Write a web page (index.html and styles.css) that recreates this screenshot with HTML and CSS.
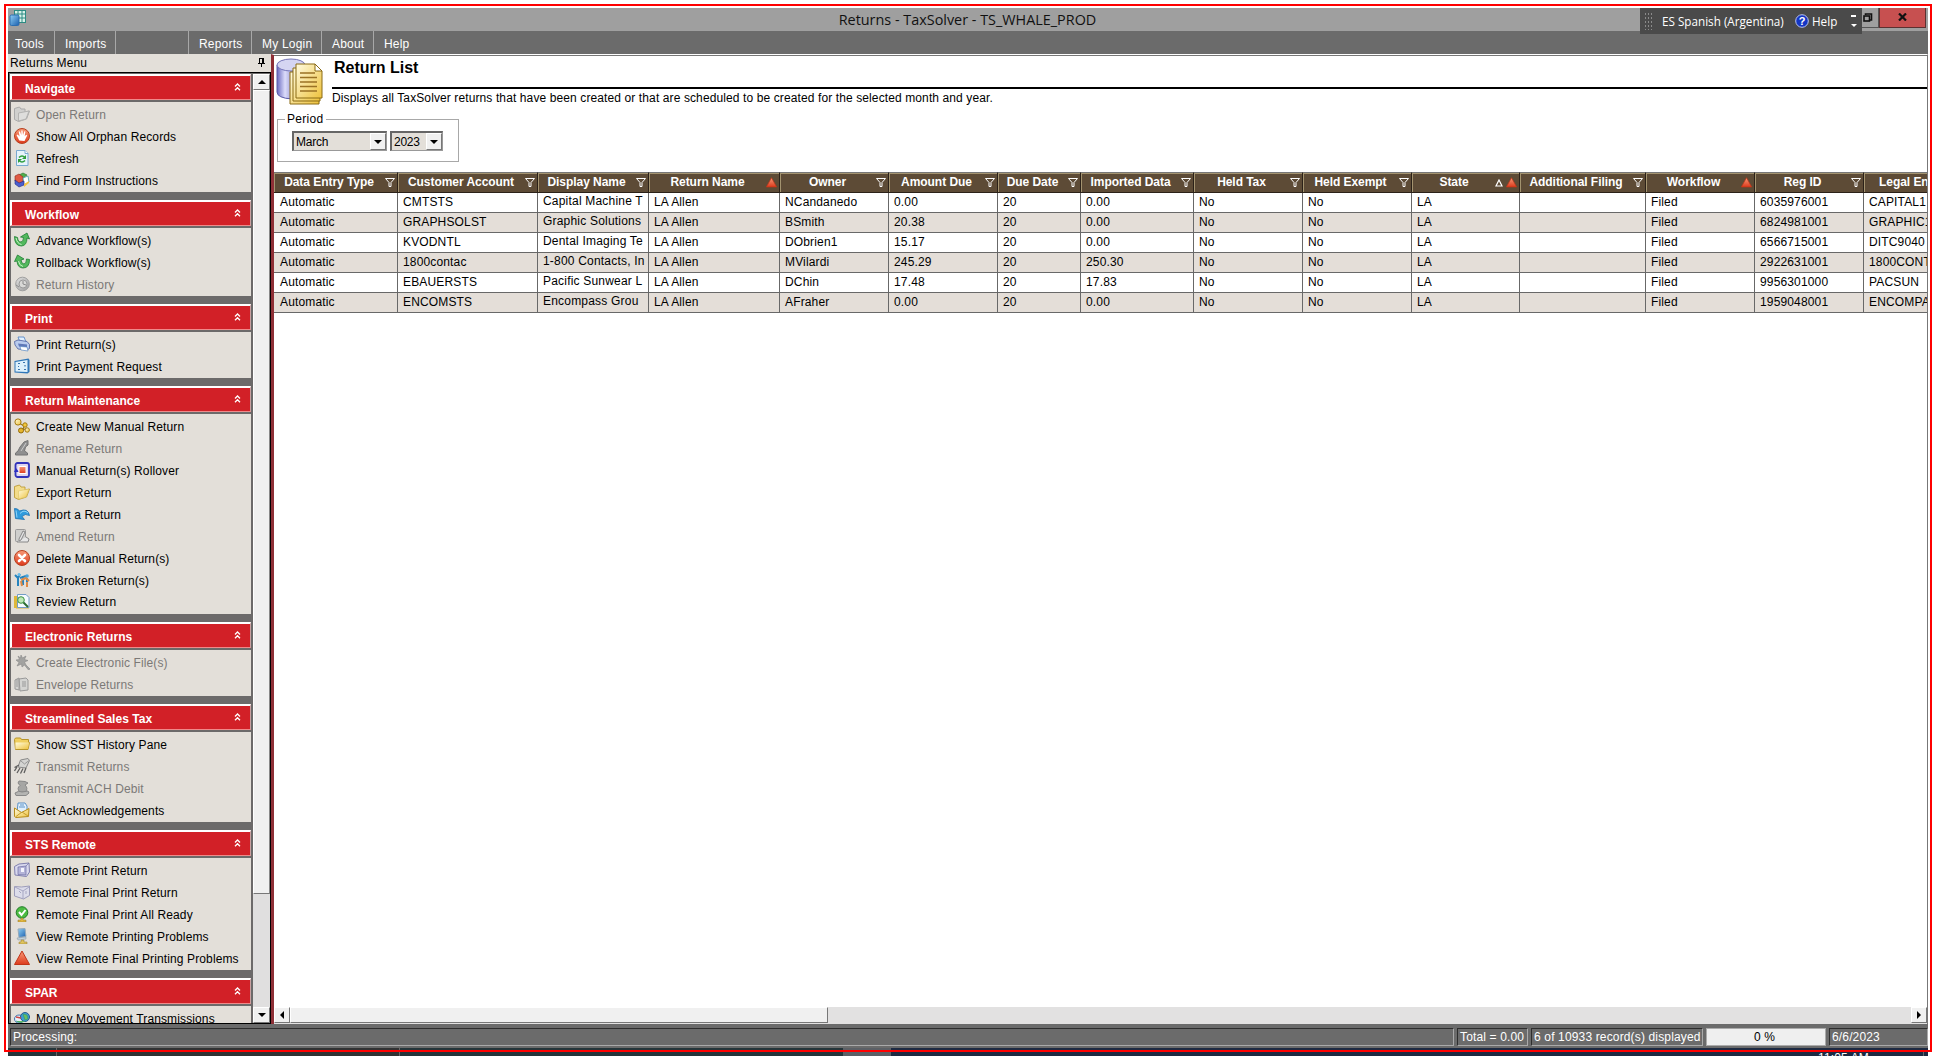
FILE: index.html
```html
<!DOCTYPE html>
<html lang="en">
<head>
<meta charset="utf-8">
<title>Returns - TaxSolver - TS_WHALE_PROD</title>
<link rel="stylesheet" href="styles.css">
</head>
<body>
<svg class="defs" width="0" height="0">
  <defs>
    <linearGradient id="gBlue" x1="0" y1="0" x2="1" y2="1"><stop offset="0" stop-color="#8fd0f5"/><stop offset="1" stop-color="#1c5fae"/></linearGradient>
    <linearGradient id="gYel" x1="0" y1="0" x2="1" y2="1"><stop offset="0" stop-color="#fffbe0"/><stop offset="1" stop-color="#eec23c"/></linearGradient>
    <linearGradient id="gRed" x1="0" y1="0" x2="0" y2="1"><stop offset="0" stop-color="#f79a78"/><stop offset="1" stop-color="#dd3a1c"/></linearGradient>
    <linearGradient id="gGrey" x1="0" y1="0" x2="1" y2="1"><stop offset="0" stop-color="#e2e2e2"/><stop offset="1" stop-color="#9a9a9a"/></linearGradient>
    <linearGradient id="gCyl" x1="0" y1="0" x2="1" y2="0"><stop offset="0" stop-color="#6a6ac0"/><stop offset=".35" stop-color="#dcdcfa"/><stop offset="1" stop-color="#5a5ab4"/></linearGradient>
    <symbol id="tri" viewBox="0 0 16 16"><path d="M8 1 15.5 14.5H.5Z" fill="url(#gRed)" stroke="#c03418"/></symbol>
    <symbol id="funnel" viewBox="0 0 10 9"><path d="M.5.5h9L6 4.5v4H4v-4Z" fill="none" stroke="#fff"/></symbol>
    <symbol id="open" viewBox="0 0 16 16"><path d="M.5 2.500 5.500 1l1.500 2h4v3l4.500-1-3 8-8 2.500-4-2Z" fill="#d0d0ce" stroke="#aaa"/><path d="M4.500 7l10.500-2-3 8-7.500 2Z" fill="#dededc" stroke="#b4b4b2"/></symbol>
    <symbol id="hand" viewBox="0 0 16 16"><circle cx="8" cy="8" r="7.500" fill="url(#gRed)" stroke="#b8401e"/><path d="M5.300 12.500 2.600 7.300l1.200-.7 1.800 2-.9-5 1.300-.2L7.300 7V2.500h1.300l.4 4.500 1.300-3.800 1.100.3-.7 4.700 1.500-1.500 1 .7-2.700 5.600Z" fill="#fff"/></symbol>
    <symbol id="refresh" viewBox="0 0 16 16"><path d="M2.500.5h8.500l3 3v12H2.500Z" fill="#e6f3fb" stroke="#7aa9d0"/><path d="M11 .5v3h3" fill="#fff" stroke="#7aa9d0"/><path d="M5 7.500q3-3 6 0M11 10.500q-3 3-6 0" fill="none" stroke="#2f9e3c" stroke-width="1.600"/><path d="M12 5v4H8ZM4 13V9h4Z" fill="#2f9e3c"/></symbol>
    <symbol id="books" viewBox="0 0 16 16"><path d="M5 3 9 1l4 2-4 3Z" fill="#4fae4c" stroke="#27702a" stroke-width=".6"/><path d="M1 4l4-2 4 3v5L5 12 1 9Z" fill="#e05a44" stroke="#8e2a1c" stroke-width=".6"/><path d="M9 6l5-2 1 6-5 3Z" fill="#fff" stroke="#49a" stroke-width=".8"/><path d="M1 8l4 3 5-2v4l-5 2-4-3Z" fill="#4b5fd0" stroke="#222a80" stroke-width=".6"/><path d="M10 12l5-3v2l-5 4Z" fill="#f5c242"/></symbol>
    <symbol id="adv" viewBox="0 0 16 16"><path d="M.5 4.500Q.5 14 7.500 14q5.500-.5 5.500-8l2.500 1-2.500-6-6.500 4 3 .5q0 4-2.500 4.500Q4 10 3.500 5.500Z" fill="#52b95c" stroke="#1d7d32" stroke-width=".8"/><path d="M2 6q1 5.500 5.500 6.500" stroke="#c8f2c8" fill="none"/></symbol>
    <symbol id="roll" viewBox="0 0 16 16"><path d="M15.500 5.500q0 8.500-6.500 8.500-5.500 0-6-7L.5 7.500 3.500 1l6.500 4-3 1q.5 4 3 4 2.500-.5 2.500-5Z" fill="#52b95c" stroke="#1d7d32" stroke-width=".8"/><path d="M4.500 7q.5 4.500 4.500 5.500" stroke="#c8f2c8" fill="none"/></symbol>
    <symbol id="clock" viewBox="0 0 16 16"><circle cx="8.500" cy="8" r="6.800" fill="url(#gGrey)" stroke="#a0a0a0"/><circle cx="9" cy="8" r="4" fill="#d8d8d6" stroke="#9b9b9b"/><path d="M9 5v3l3 1M2 9l3 2" stroke="#8a8a8a" fill="none"/></symbol>
    <symbol id="printer" viewBox="0 0 16 16"><path d="M4 1h6l2 5H6Z" fill="#dff0ff" stroke="#4a7fc0" stroke-width=".8"/><path d="M.5 5.500 4 4l9 1.500 2.500 3v4L13 14l-9-1L1 9Z" fill="#b9cbee" stroke="#4b5e9e" stroke-width=".8"/><path d="M4 7.500l9 1v3l-8-1Z" fill="#5f78b8"/><path d="M6 10.500l7 .5 1 4-7-1Z" fill="#fff" stroke="#4a7fc0" stroke-width=".6"/></symbol>
    <symbol id="pay" viewBox="0 0 16 16"><path d="M.5 3 14.500.5l1 1.500v12L13.500 15.500.5 14.500Z" fill="#2f76b8"/><path d="M1.500 4l12-2V14l-12-.5Z" fill="#dcf0fc"/><path d="M4 5.500h2M9 4.500h2M4 11.500h2M10 11.500h2M11 7v1.500M4 8.500h1" stroke="#3974ad" stroke-width="1.200"/></symbol>
    <symbol id="gears" viewBox="0 0 16 16"><path d="M5 5l5 3-1 4 4-2" fill="none" stroke="#9a7a1c" stroke-width="1.200"/><circle cx="4" cy="4" r="3.100" fill="url(#gYel)" stroke="#a57a10"/><circle cx="11" cy="7" r="2.200" fill="#f1c73c" stroke="#a57a10"/><circle cx="7" cy="12.500" r="2.500" fill="#e6b52c" stroke="#936a0a"/><circle cx="13.200" cy="12" r="2.200" fill="url(#gYel)" stroke="#a57a10"/></symbol>
    <symbol id="quill" viewBox="0 0 16 16"><path d="M14 .5 10 2 6 7l-2 4-2.500 2v2h12v-2l-3-2 1-4 2.500-2Z" fill="#8f8f8f" stroke="#747474"/><path d="M12 3 7 11" stroke="#ccc"/></symbol>
    <symbol id="rollover" viewBox="0 0 16 16"><rect x="1.500" y="1" width="13.500" height="14" rx="2" fill="#ddd6ee" stroke="#3134bb" stroke-width="1.800"/><path d="M0 10l2-4 3 4Z" fill="#2c2fc4"/><rect x="5" y="4.500" width="7" height="7" fill="url(#gRed)" stroke="#fff"/></symbol>
    <symbol id="export" viewBox="0 0 16 16"><path d="M.5 2.500 5.500 1l1.500 2h4v3l4.500-1-3 8-8 2.500-4-2Z" fill="#f3dc8a" stroke="#b89428" stroke-width=".8"/><path d="M4.500 7l10.500-2-3 8-7.500 2Z" fill="url(#gYel)" stroke="#dcc262" stroke-width=".6"/></symbol>
    <symbol id="import" viewBox="0 0 16 16"><path d="M.5 2.500l1 10 9 1-2.500-3q3-3.500 7.500-1-1.500-8-10-4.500L3.500 3Z" fill="#2f9bdd" stroke="#1a6fae" stroke-width=".8"/><path d="M2 4.500l1 7M6 7.500q4-4.500 8-.5" stroke="#94d6f7" fill="none"/></symbol>
    <symbol id="amend" viewBox="0 0 16 16"><rect x="1.500" y="1.500" width="10" height="12" rx="1" fill="#cfcfcd" stroke="#999"/><path d="M9 3l2 1-4 8-2 1v-2ZM3 14h11l1-3-3-2" fill="#e6e6e6" stroke="#888"/></symbol>
    <symbol id="delete" viewBox="0 0 16 16"><circle cx="8" cy="8" r="7.500" fill="url(#gRed)" stroke="#b8401e"/><path d="M5 5l6 6M11 5l-6 6" stroke="#fff" stroke-width="2.600" stroke-linecap="round"/></symbol>
    <symbol id="fix" viewBox="0 0 16 16"><path d="M1 3l3 3 2-4M4 6v8M6 6l6-2M9 4v9M13 6v8" stroke="#2684be" stroke-width="2" fill="none"/><path d="M7 8l5-2 3 3M7 9l1 5M13 10v5" stroke="#df8a46" stroke-width="2" fill="none"/><circle cx="5" cy="2.500" r="1.500" fill="#67bbe8"/><circle cx="13" cy="4" r="1.800" fill="#4aa4dc"/></symbol>
    <symbol id="review" viewBox="0 0 16 16"><path d="M0 3h4v12H0ZM2 13h13v2.500H2Z" fill="#dfb83a"/><path d="M3.500 1.500H12l3 3v10H3.500Z" fill="#f5faff" stroke="#739cc6"/><path d="M9 9l5 5" stroke="#2b6c32" stroke-width="2"/><circle cx="7" cy="7" r="3.300" fill="#bfe8b8" stroke="#3d9140"/></symbol>
    <symbol id="efile" viewBox="0 0 16 16"><path d="M7 1l1.500 3L12 2l-1.500 3.500 3.500 1-3.500 1.500L12 11l4 4-1.500 1-4-5L8 13l-.5-3L3 12l2-3.500L2 6l3.500-.5L4 2l2.500 2Z" fill="#a2a2a0" stroke="#888" stroke-width=".6"/></symbol>
    <symbol id="envelope" viewBox="0 0 16 16"><path d="M1 4l4-2v12l-4-1ZM5 3l7-1 2 2v10l-8 1Z" fill="#d4d4d2" stroke="#999"/><path d="M3 3v8M8 6h4M8 8h4M8 10h4" stroke="#999"/></symbol>
    <symbol id="folder" viewBox="0 0 16 16"><path d="M.5 3.500 1.500 2h5l1 1.500h7v3h1L14 13.500H1.500Z" fill="#f0cf60" stroke="#b89428"/><path d="M1.500 6.500H15L14 13H1.500Z" fill="url(#gYel)"/></symbol>
    <symbol id="transmit" viewBox="0 0 16 16"><path d="M6.500 2 14 .5l1.500 2L12 10 4 9Z" fill="#d4d4d2" stroke="#888"/><path d="M3 9l-2.500 4M6 10l-3 5M9 10.500l-2.500 5M12 10l-2 5M5 7 .5 9.500" stroke="#5f5f5f" stroke-width="1.300"/><path d="M7 3l3.500 3L15 2.500" stroke="#999" fill="none"/></symbol>
    <symbol id="debit" viewBox="0 0 16 16"><path d="M5 1l6 .5 3 1.500-3 2q3.500 3 .5 7H5.500Q2.500 8 6 5.500L4 3Z" fill="#a6a6a4" stroke="#888"/><path d="M1 13q4-3 7-1l6-1 1 2-3 2.500H2Z" fill="#b4b4b2" stroke="#888"/></symbol>
    <symbol id="ack" viewBox="0 0 16 16"><path d="M4 1h7l2 3v7H3Z" fill="#e1f0fc" stroke="#5b91c7"/><path d="M6 3h4M5 5h6" stroke="#5b91c7"/><path d="M.5 6l7 4.500L15 6.500l-.5 8-12.500 1-1.500-1Z" fill="url(#gYel)" stroke="#b88d1c"/><path d="M2 14.500l6-4.500 6 4" fill="none" stroke="#c59c2c"/></symbol>
    <symbol id="rprint" viewBox="0 0 16 16"><path d="M.5 4.500 5 2l10-1 .5 9-3 4.500L1 13Z" fill="#d9d9ee" stroke="#8080ae"/><path d="M4 5l8-1v9l-8-.5ZM12 4l3-3" fill="#b4b4d8" stroke="#6d6da4" stroke-width=".7"/><path d="M7 6v4h3V6" fill="#f4f4fd"/></symbol>
    <symbol id="rfinal" viewBox="0 0 16 16"><path d="M.5 2.500 7.500 3l8-1v9.500L9.500 15l-9-3Z" fill="#dcdcea" stroke="#9c9cba"/><path d="M1 3l8 4 6-4M9 7v8M5 7l2 2M12 7v3" stroke="#a6a6c2" fill="none"/></symbol>
    <symbol id="ready" viewBox="0 0 16 16"><circle cx="8" cy="6.500" r="5.800" fill="#4cbb42" stroke="#1d7c25"/><path d="M5 6l2.500 3L11.500 4" stroke="#fff" stroke-width="2" fill="none"/><path d="M7 12h2v2h3v2H4v-2h3Z" fill="#e6b93c" stroke="#8e7430" stroke-width=".5"/></symbol>
    <symbol id="problem" viewBox="0 0 16 16"><path d="M4 1l7-.5 1 8-7 1Z" fill="url(#gBlue)" stroke="#93a9bb"/><path d="M3 10l9-1v2l-8 1Z" fill="#c3d2dc" stroke="#8092a0" stroke-width=".5"/><path d="M7 12h3v2h3v2H5v-2h2Z" fill="#e0c35c" stroke="#8e7430" stroke-width=".5"/></symbol>
    <symbol id="money" viewBox="0 0 16 16"><ellipse cx="5" cy="9" rx="4.500" ry="4" fill="#e9f2fa" stroke="#3c74ae"/><circle cx="11" cy="7" r="4.500" fill="#3e9ed2" stroke="#2a5c8c"/><path d="M9 4l4 1 1 4-3 1ZM2 11q5 3 9 0" fill="#6cbf5e" stroke="#397" stroke-width=".7"/><path d="M2 7l5 1" stroke="#c44" stroke-width="1.500"/></symbol>
    <symbol id="chev" viewBox="0 0 7 8"><path d="M1 3.500 3.500 1 6 3.500M1 7.200 3.500 4.700 6 7.200" fill="none" stroke="#fff" stroke-width="1.300"/></symbol>
    <symbol id="arr" viewBox="0 0 8 4"><path d="M0 4 4 0 8 4Z" fill="#000"/></symbol>
  </defs>
</svg>

<div class="frame">
  <header class="titlebar">
    <svg class="app-icon" viewBox="0 0 17 16"><rect x="5.500" y=".5" width="11" height="12" fill="#d9f2ea" stroke="#2d8b83"/><path d="M5 4h11M5 8h11M9 0v12M13 0v12" stroke="#2d8b83"/><rect x="1" y="5" width="9" height="10.500" rx="1.500" fill="url(#gBlue)" stroke="#2a6db0"/></svg>
    <h1>Returns - TaxSolver - TS_WHALE_PROD</h1>
    <span class="restore"><svg viewBox="0 0 10 9"><path d="M2.500 2V1h6v6H7" fill="none" stroke="#111" stroke-width="1.600"/><rect x="1" y="3" width="5.500" height="5" fill="none" stroke="#111" stroke-width="1.600"/></svg></span>
    <span class="close"><svg viewBox="0 0 9 8"><path d="M1 .5 8 7.500M8 .5 1 7.500" stroke="#111" stroke-width="2.200"/></svg></span>
  </header>
  <div class="langbar">
    <i class="grip"></i><span class="lang">ES Spanish (Argentina)</span>
    <svg class="qmark" viewBox="0 0 14 14"><circle cx="7" cy="7" r="6.300" fill="#1436c4" stroke="#b9c4ee"/></svg><b class="q">?</b>
    <span class="lhelp">Help</span>
    <svg class="opts" viewBox="0 0 6 13"><path d="M0 1h5" stroke="#fff" stroke-width="2"/><path d="M0 9h6l-3 3Z" fill="#fff"/></svg>
  </div>
  <nav class="menubar">
    <span class="m1">Tools</span><span class="m2">Imports</span><span class="m3"></span><span class="m4">Reports</span><span class="m5">My Login</span><span class="m6">About</span><span class="m7">Help</span>
  </nav>
  <div class="work">
    <aside class="side">
      <div class="side-title"><span>Returns Menu</span><svg viewBox="0 0 7 9"><path d="M1.500 0v5M4.500 0v5M5.500 0v5M1 .5h5M0 5.500h7M3.500 5v4" stroke="#000" fill="none"/></svg></div>
      <div class="side-box">
        <div class="groups">
          <h2>Navigate<svg><use href="#chev"/></svg></h2>
          <ul>
            <li class="off"><svg><use href="#open"/></svg>Open Return</li>
            <li><svg><use href="#hand"/></svg>Show All Orphan Records</li>
            <li><svg><use href="#refresh"/></svg>Refresh</li>
            <li><svg><use href="#books"/></svg>Find Form Instructions</li>
          </ul>
          <h2>Workflow<svg><use href="#chev"/></svg></h2>
          <ul>
            <li><svg><use href="#adv"/></svg>Advance Workflow(s)</li>
            <li><svg><use href="#roll"/></svg>Rollback Workflow(s)</li>
            <li class="off"><svg><use href="#clock"/></svg>Return History</li>
          </ul>
          <h2>Print<svg><use href="#chev"/></svg></h2>
          <ul>
            <li><svg><use href="#printer"/></svg>Print Return(s)</li>
            <li><svg><use href="#pay"/></svg>Print Payment Request</li>
          </ul>
          <h2>Return Maintenance<svg><use href="#chev"/></svg></h2>
          <ul>
            <li><svg><use href="#gears"/></svg>Create New Manual Return</li>
            <li class="off"><svg><use href="#quill"/></svg>Rename Return</li>
            <li><svg><use href="#rollover"/></svg>Manual Return(s) Rollover</li>
            <li><svg><use href="#export"/></svg>Export Return</li>
            <li><svg><use href="#import"/></svg>Import a Return</li>
            <li class="off"><svg><use href="#amend"/></svg>Amend Return</li>
            <li><svg><use href="#delete"/></svg>Delete Manual Return(s)</li>
            <li><svg><use href="#fix"/></svg>Fix Broken Return(s)</li>
            <li class="tight"><svg><use href="#review"/></svg>Review Return</li>
          </ul>
          <h2>Electronic Returns<svg><use href="#chev"/></svg></h2>
          <ul>
            <li class="off"><svg><use href="#efile"/></svg>Create Electronic File(s)</li>
            <li class="off"><svg><use href="#envelope"/></svg>Envelope Returns</li>
          </ul>
          <h2>Streamlined Sales Tax<svg><use href="#chev"/></svg></h2>
          <ul>
            <li><svg><use href="#folder"/></svg>Show SST History Pane</li>
            <li class="off"><svg><use href="#transmit"/></svg>Transmit Returns</li>
            <li class="off"><svg><use href="#debit"/></svg>Transmit ACH Debit</li>
            <li><svg><use href="#ack"/></svg>Get Acknowledgements</li>
          </ul>
          <h2>STS Remote<svg><use href="#chev"/></svg></h2>
          <ul>
            <li><svg><use href="#rprint"/></svg>Remote Print Return</li>
            <li><svg><use href="#rfinal"/></svg>Remote Final Print Return</li>
            <li><svg><use href="#ready"/></svg>Remote Final Print All Ready</li>
            <li><svg><use href="#problem"/></svg>View Remote Printing Problems</li>
            <li><svg><use href="#tri"/></svg>View Remote Final Printing Problems</li>
          </ul>
          <h2>SPAR<svg><use href="#chev"/></svg></h2>
          <ul>
            <li><svg><use href="#money"/></svg>Money Movement Transmissions</li>
          </ul>
        </div>
        <div class="vscroll">
          <span class="btn"><svg class="up"><use href="#arr"/></svg></span>
          <span class="thumb"></span>
          <span class="btn end"><svg class="down"><use href="#arr"/></svg></span>
        </div>
      </div>
    </aside>
    <main>
      <section class="head">
        <svg class="big" viewBox="0 0 47 48"><path d="M1 7v27q0 6 15 7h8V7Z" fill="url(#gCyl)" stroke="#5a5aa8"/><ellipse cx="15" cy="7" rx="14" ry="6" fill="#d5d5f2" stroke="#7474b8"/><g stroke="#8a6a14" fill="url(#gYel)"><path d="M14 14h25l4 4v28H14Z"/><path d="M17 10h22l5 5v28H17Z"/><path d="M20 6h19l7 7v27H20Z"/></g><path d="M39 6v7h7Z" fill="#fff" stroke="#8a6a14"/><path d="M24 15h15M24 19.500h17M24 24h17M24 28.500h17M24 33h17" stroke="#9a7224" stroke-width="1.500"/></svg>
        <div class="head-text"><h3>Return List</h3><p>Displays all TaxSolver returns that have been created or that are scheduled to be created for the selected month and year.</p></div>
      </section>
      <fieldset class="period"><legend>Period</legend>
        <span class="combo month">March<b class="btn"><svg class="down"><use href="#arr"/></svg></b></span>
        <span class="combo year">2023<b class="btn"><svg class="down"><use href="#arr"/></svg></b></span>
      </fieldset>
      <div class="gridwrap">
        <table>
          <colgroup><col style="width:124px"><col style="width:140px"><col style="width:111px"><col style="width:131px"><col style="width:109px"><col style="width:109px"><col style="width:83px"><col style="width:113px"><col style="width:109px"><col style="width:109px"><col style="width:108px"><col style="width:126px"><col style="width:109px"><col style="width:109px"><col style="width:109px"></colgroup>
          <thead><tr>
            <th><div><span>Data Entry Type</span><svg class="f"><use href="#funnel"/></svg></div></th>
            <th><div><span>Customer Account</span><svg class="f"><use href="#funnel"/></svg></div></th>
            <th><div><span>Display Name</span><svg class="f"><use href="#funnel"/></svg></div></th>
            <th><div><span>Return Name</span><svg class="t"><use href="#tri"/></svg></div></th>
            <th><div><span>Owner</span><svg class="f"><use href="#funnel"/></svg></div></th>
            <th><div><span>Amount Due</span><svg class="f"><use href="#funnel"/></svg></div></th>
            <th><div><span>Due Date</span><svg class="f"><use href="#funnel"/></svg></div></th>
            <th><div><span>Imported Data</span><svg class="f"><use href="#funnel"/></svg></div></th>
            <th><div><span>Held Tax</span><svg class="f"><use href="#funnel"/></svg></div></th>
            <th><div><span>Held Exempt</span><svg class="f"><use href="#funnel"/></svg></div></th>
            <th><div><span>State</span><svg class="s" viewBox="0 0 8 8"><path d="M4 1 7 7H1Z" fill="none" stroke="#fff" stroke-width="1.200"/></svg><svg class="t"><use href="#tri"/></svg></div></th>
            <th><div><span>Additional Filing</span><svg class="f"><use href="#funnel"/></svg></div></th>
            <th><div><span>Workflow</span><svg class="t"><use href="#tri"/></svg></div></th>
            <th><div><span>Reg ID</span><svg class="f"><use href="#funnel"/></svg></div></th>
            <th><div class="last"><span>Legal Entity</span></div></th>
          </tr></thead>
          <tbody>
            <tr><td>Automatic</td><td>CMTSTS</td><td class="dn">Capital Machine T</td><td>LA Allen</td><td>NCandanedo</td><td>0.00</td><td>20</td><td>0.00</td><td>No</td><td>No</td><td>LA</td><td></td><td>Filed</td><td>6035976001</td><td>CAPITAL1</td></tr>
            <tr><td>Automatic</td><td>GRAPHSOLST</td><td class="dn">Graphic Solutions</td><td>LA Allen</td><td>BSmith</td><td>20.38</td><td>20</td><td>0.00</td><td>No</td><td>No</td><td>LA</td><td></td><td>Filed</td><td>6824981001</td><td>GRAPHIC1</td></tr>
            <tr><td>Automatic</td><td>KVODNTL</td><td class="dn">Dental Imaging Te</td><td>LA Allen</td><td>DObrien1</td><td>15.17</td><td>20</td><td>0.00</td><td>No</td><td>No</td><td>LA</td><td></td><td>Filed</td><td>6566715001</td><td>DITC9040</td></tr>
            <tr><td>Automatic</td><td>1800contac</td><td class="dn">1-800 Contacts, In</td><td>LA Allen</td><td>MVilardi</td><td>245.29</td><td>20</td><td>250.30</td><td>No</td><td>No</td><td>LA</td><td></td><td>Filed</td><td>2922631001</td><td>1800CONT</td></tr>
            <tr><td>Automatic</td><td>EBAUERSTS</td><td class="dn">Pacific Sunwear L</td><td>LA Allen</td><td>DChin</td><td>17.48</td><td>20</td><td>17.83</td><td>No</td><td>No</td><td>LA</td><td></td><td>Filed</td><td>9956301000</td><td>PACSUN</td></tr>
            <tr><td>Automatic</td><td>ENCOMSTS</td><td class="dn">Encompass Grou</td><td>LA Allen</td><td>AFraher</td><td>0.00</td><td>20</td><td>0.00</td><td>No</td><td>No</td><td>LA</td><td></td><td>Filed</td><td>1959048001</td><td>ENCOMPA</td></tr>
          </tbody>
        </table>
      </div>
      <div class="hscroll">
        <span class="btn"><svg class="left"><use href="#arr"/></svg></span>
        <span class="thumb"></span>
        <span class="btn end"><svg class="right"><use href="#arr"/></svg></span>
      </div>
    </main>
  </div>
  <footer>
    <span class="p1">Processing:</span><span class="p2">Total = 0.00</span><span class="p3">6 of 10933 record(s) displayed</span><span class="p4">0 %</span><span class="p5">6/6/2023</span>
  </footer>
  <div class="taskbar"><i class="tk1"></i><i class="tk2"></i><i class="tk3"></i><i class="tk4"></i><span>11:05 AM</span></div>
</div>
<div class="outline"></div>
</body>
</html>
```
FILE: styles.css
```css
* { box-sizing: border-box; margin: 0; padding: 0; }
body { width: 1936px; height: 1056px; overflow: hidden; background: #fff; font: 12px/15px "Liberation Sans", Arial, sans-serif; letter-spacing: .15px; color: #000; white-space: nowrap; }
svg { display: block; flex: none; }
.defs { position: absolute; }
.outline { position: absolute; left: 4px; top: 4px; width: 1928px; height: 1048px; border: 2px solid #f00; }
.frame { margin: 8px 8px 0; width: 1920px; height: 1048px; display: flex; flex-direction: column; position: relative; overflow: hidden; }

.titlebar { height: 23px; background: #9f9f9f; display: flex; position: relative; flex: none; }
.app-icon { width: 17px; height: 16px; margin: 2px 0 0 1px; }
.titlebar h1 { flex: 1; text-align: center; font: 14.4px/23px "Open Sans", "Noto Sans", sans-serif; letter-spacing: 0; padding-left: 57px; color: #111; }
.restore { width: 27px; height: 20px; border: 1px solid #555; border-top: 0; padding: 5px 0 0 10px; }
.restore svg { width: 10px; height: 9px; }
.close { width: 47px; height: 20px; background: #c75050; border: 1px solid #5c3030; border-top: 0; padding: 5px 0 0 18px; margin-right: 2px; }
.close svg { width: 9px; height: 8px; }
.langbar { position: absolute; left: 1632px; top: 0; width: 222px; height: 26px; background: #4a4a4a; color: #fff; display: flex; align-items: center; font: 11.7px/26px "Open Sans", sans-serif; letter-spacing: 0; z-index: 2; }
.grip { width: 9px; height: 18px; margin-left: 4px; background: radial-gradient(circle, #8a8a8a 0 .8px, transparent 1px) 0 0 / 3px 4px; }
.lang { margin-left: 9px; width: 133px; }
.qmark { width: 14px; height: 14px; }
.q { width: 14px; margin-left: -14px; text-align: center; font: bold 11px/14px "Liberation Sans", sans-serif; }
.lhelp { margin-left: 3px; width: 39px; }
.opts { width: 6px; height: 13px; }

.menubar { height: 23px; background: #6b6b6b; display: flex; color: #fff; line-height: 26px; flex: none; letter-spacing: .2px; }
.menubar span { border-right: 1px solid #a8a8a8; }
.menubar .m1 { width: 47px; padding-left: 7px; } .menubar .m2 { width: 61px; padding-left: 10px; }
.menubar .m3 { width: 73px; } .menubar .m4 { width: 63px; padding-left: 10px; }
.menubar .m5 { width: 70px; padding-left: 10px; } .menubar .m6 { width: 52px; padding-left: 10px; }
.menubar .m7 { border: 0; padding-left: 10px; }

.work { display: flex; height: 970px; flex: none; }
.side { width: 263px; display: flex; flex-direction: column; background: #e3dfd9; }
.side-title { height: 18px; line-height: 18px; padding: 0 6px 0 2px; display: flex; justify-content: space-between; }
.side-title svg { width: 7px; height: 9px; margin-top: 4px; }
.side-box { flex: 1; border: 1px solid #000; background: #6c6a6a; display: flex; min-height: 0; padding-top: 1px; }
.groups { width: 244px; overflow: hidden; padding-left: 1px; }
.groups h2 { height: 26px; width: 241px; background: #d22027; border: 2px solid #fff; border-right: 1px solid #c9a0a0; border-bottom: 1px solid #f08a8a; font-size: 12px; line-height: 22px; color: #fff; padding: 2px 9px 0 13px; display: flex; justify-content: space-between; letter-spacing: .03px; }
.groups h2 svg { width: 7px; height: 8px; margin-top: 5px; }
.groups ul { list-style: none; background: #e3dfd9; width: 240px; margin: 2px 0 8px 1px; padding: 2px 0 0 3px; }
.groups li { height: 22px; line-height: 22px; display: flex; letter-spacing: .12px; }
.groups li svg { width: 16px; height: 16px; margin: 2px 6px 0 0; }
.groups li.off { color: #7b7977; }
.groups li.tight { position: relative; top: -1px; }
.vscroll { width: 17px; background: #e0dfdf; display: flex; flex-direction: column; }
.btn { display: flex; align-items: center; justify-content: center; width: 17px; height: 16px; background: #f0f0f0; border: 1px solid #fff; border-right-color: #777; border-bottom-color: #777; flex: none; }
.btn svg { width: 8px; height: 4px; }
.down { transform: rotate(180deg); } .left { transform: rotate(-90deg); } .right { transform: rotate(90deg); }
.vscroll .thumb { height: 804px; background: #f0f0f0; border: 1px solid #fff; border-right-color: #888; border-bottom-color: #777; }
.vscroll .end { margin-top: auto; }

main { flex: 1; min-width: 0; background: #fff; border-left: 3px solid #8e2f36; border-top: 1px solid #fff; border-right: 1px solid #777; display: flex; flex-direction: column; box-shadow: inset 0 1px #777; }
.head { display: flex; height: 57px; }
.big { width: 47px; height: 48px; margin: 3px 0 0 2px; }
.head-text { flex: 1; margin-left: 9px; }
.head h3 { font-size: 16px; line-height: 20px; letter-spacing: 0; padding: 3px 0 0 2px; height: 34px; border-bottom: 2px solid #000; }
.head p { line-height: 19px; letter-spacing: .11px; }
.period { width: 182px; height: 50px; margin: 0 0 0 3px; padding: 5px 0 0 14px; border: 1px solid #a8a8a8; display: flex; gap: 3px; }
.period legend { margin-left: -7px; padding: 0 2px; line-height: 14px; letter-spacing: .3px; }
.combo { height: 20px; background: #e3dfd9; border: 1px solid #999; border-left: 2px solid #666; border-top: 2px solid #666; display: flex; justify-content: space-between; padding-left: 2px; line-height: 18px; letter-spacing: -.25px; }
.combo .btn { width: 16px; height: 17px; }
.month { width: 95px; } .year { width: 53px; }
.gridwrap { flex: 1; overflow: hidden; margin-top: 10px; min-height: 0; }
table { table-layout: fixed; width: 1698px; border-collapse: separate; border-spacing: 0; }
th { height: 21px; background: #5d4b36; border-top: 1px solid #777; border-right: 1px solid #2b2118; border-bottom: 1px solid #2b2118; box-shadow: inset 1px 1px #a3936f; color: #fff; font-size: 12px; letter-spacing: -.05px; }
th div { display: flex; align-items: center; height: 19px; padding: 0 2px 0 1px; }
th span { flex: 1; text-align: center; }
th .last { width: 200px; padding-left: 15px; } th .last span { text-align: left; }
th .f { width: 10px; height: 9px; margin-left: 2px; } th .t { width: 11px; height: 11px; margin-left: 1px; } th .s { width: 8px; height: 8px; margin-right: 2px; }
td { height: 20px; line-height: 18px; padding: 0 0 1px 5px; border-right: 1px solid #686868; border-bottom: 1px solid #686868; overflow: hidden; letter-spacing: .15px; }
td:first-child { padding-left: 6px; }
td.dn { padding-bottom: 3px; line-height: 16px; letter-spacing: .2px; }
tbody tr:nth-child(even) { background: #e4ded8; }
.hscroll { height: 17px; background: #e2e1e1; display: flex; flex: none; }
.hscroll .btn { width: 16px; }
.hscroll .thumb { width: 538px; height: 16px; background: #f0f0f0; border: 1px solid #fff; border-right-color: #777; border-bottom-color: #777; }
.hscroll .end { margin-left: auto; }

footer { height: 24px; background: #6b6b6b; display: flex; padding: 4px 0 2px 2px; gap: 3px; color: #fff; line-height: 17px; flex: none; letter-spacing: .15px; }
footer span { border: 1px solid #2e2e2e; border-right-color: #aaa; border-bottom-color: #aaa; padding-left: 2px; overflow: hidden; }
footer .p1 { flex: 1; } footer .p2 { width: 71px; } footer .p3 { width: 172px; }
footer .p4 { width: 120px; background: #efefef; color: #000; text-align: center; border-color: #aaa; padding: 0 3px 0 0; } footer .p5 { width: 99px; }
.taskbar { height: 8px; background: #1d2a42; display: flex; overflow: hidden; color: #fff; line-height: 14px; flex: none; }
.taskbar i { height: 8px; }
.tk1 { width: 49px; background: #24353a; border-right: 1px solid #666; } .tk2 { width: 343px; background: #303233; border-right: 1px solid #666; }
.tk3 { width: 443px; background: #24353a; } .tk4 { width: 48px; background: #5b6066; }
.taskbar span { margin: 3px 4px 0 auto; padding-right: 54px; height: 14px; border-right: 1px solid #666; }
```
